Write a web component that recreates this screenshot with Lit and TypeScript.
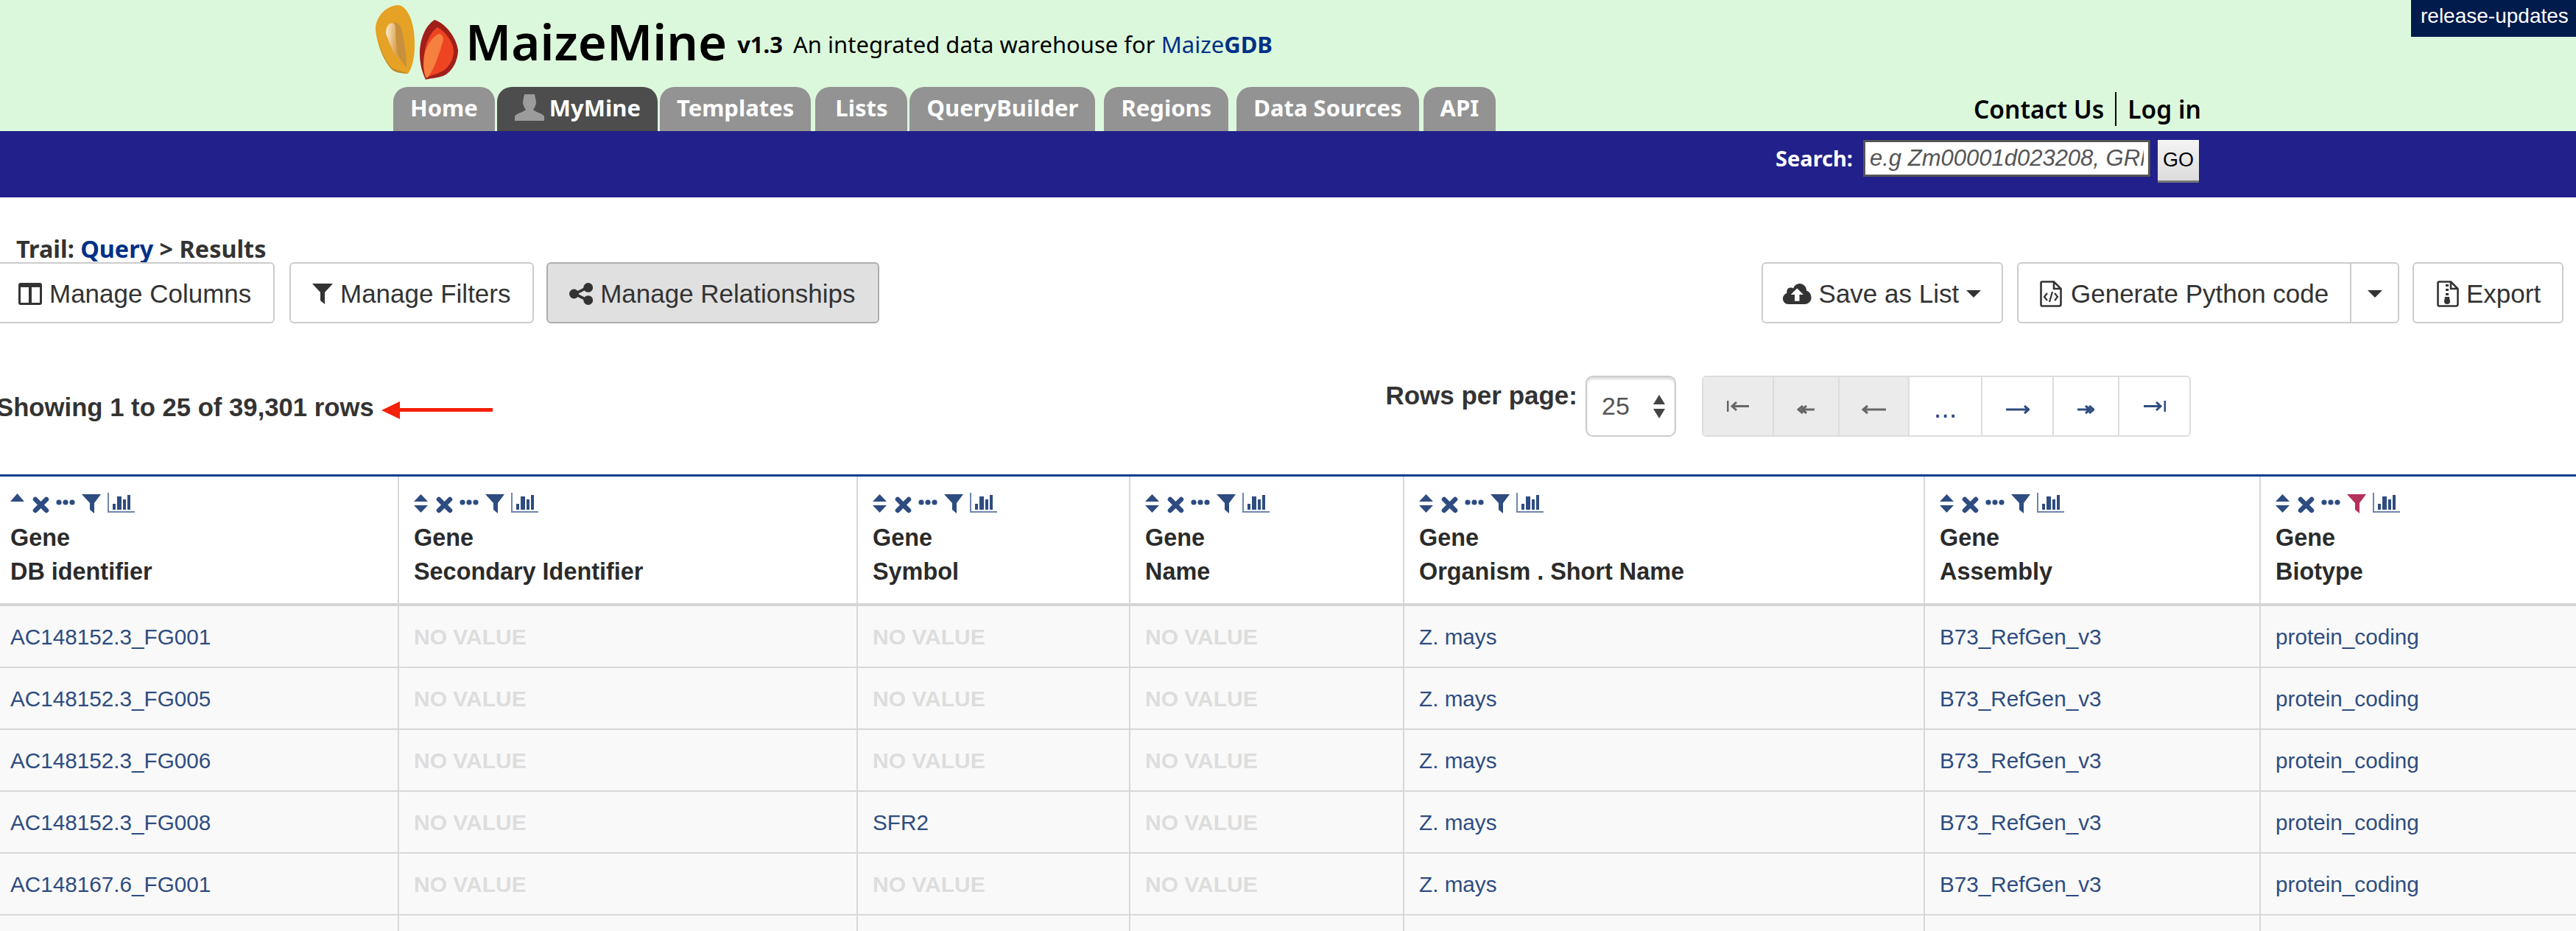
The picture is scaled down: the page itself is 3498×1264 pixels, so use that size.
import { css, html, LitElement, svg } from 'lit';
import { customElement } from 'lit/decorators.js';

const NO_VALUE = 'NO VALUE';

const COLUMNS = [
  'DB identifier',
  'Secondary Identifier',
  'Symbol',
  'Name',
  'Organism . Short Name',
  'Assembly',
  'Biotype',
];

const ROWS = [
  ['AC148152.3_FG001', '', '', '', 'Z. mays', 'B73_RefGen_v3', 'protein_coding'],
  ['AC148152.3_FG005', '', '', '', 'Z. mays', 'B73_RefGen_v3', 'protein_coding'],
  ['AC148152.3_FG006', '', '', '', 'Z. mays', 'B73_RefGen_v3', 'protein_coding'],
  ['AC148152.3_FG008', '', 'SFR2', '', 'Z. mays', 'B73_RefGen_v3', 'protein_coding'],
  ['AC148167.6_FG001', '', '', '', 'Z. mays', 'B73_RefGen_v3', 'protein_coding'],
];

const TABS = ['Home', 'MyMine', 'Templates', 'Lists', 'QueryBuilder', 'Regions', 'Data Sources', 'API'];

const logo = html`<svg class="logo" viewBox="0 0 112 104" aria-hidden="true">
  <defs>
    <linearGradient id="shine" x1="0" y1="0" x2="1" y2="0.3">
      <stop offset="0" stop-color="#fff2d8" />
      <stop offset="1" stop-color="#d9a04e" />
    </linearGradient>
  </defs>
  <path d="M30 1C42 1 50 20 52 37C54 55 54 80 44 94C34 92 24 92 20 86C10 72 2 55 0 35C-1 20 12 2 30 1Z" fill="#e5a224" />
  <path d="M4 50C8 66 14 78 22 86C30 90 38 91 44 94C34 94 24 92 20 86C12 76 6 64 4 50Z" fill="#c08a2c" />
  <path d="M24 25C30 24 34 28 36 36C39 52 42 68 42 86C34 76 24 60 21 44C20 36 21 28 24 25Z" fill="#c8903c" />
  <path d="M20 26C24 24 26 26 27 30C27 46 29 60 30 74C24 66 18 50 14 40C14 32 16 28 20 26Z" fill="url(#shine)" />
  <path d="M80 21C96 26 110 46 112 62C112 76 104 92 92 97C84 100 76 100 68 102C64 94 60 82 60 67C60 50 66 30 80 21Z" fill="#a01f1a" />
  <path d="M84 31C96 38 106 52 106 64C106 76 98 88 88 92C80 96 74 96 68 100C66 90 64 80 66 68C68 52 74 38 84 31Z" fill="#ee4422" />
  <path d="M86 40C90 40 92 44 92 48C86 68 80 88 70 100C66 96 64 88 66 70C68 58 76 44 86 40Z" fill="#f58040" />
</svg>`;

const userIcon = html`<svg class="user" viewBox="0 0 42 36" aria-hidden="true">
  <path d="M14 0H28L30 10C30 16 27 19 26 21C30 25 40 26 41 30V36H1V30C2 26 12 25 16 21C15 19 12 16 12 10Z" fill="#9c9c9c" />
</svg>`;

/** Sort, remove, more, filter and summary icons above a column title. */
function headerIcons(sorted: boolean, filterColor: string) {
  return html`<svg class="col-icons" viewBox="0 0 172 30" aria-hidden="true">
    <g fill="#2e4c80">
      ${sorted
        ? svg`<path d="M0 12 9.5 1 19 12Z" />`
        : svg`<path d="M0 12 9.5 2 19 12ZM0 17 9.5 27 19 17Z" />`}
      <circle cx="66" cy="13" r="3.6" />
      <circle cx="75" cy="13" r="3.6" />
      <circle cx="84" cy="13" r="3.6" />
      <rect x="139" y="15" width="4" height="8" />
      <rect x="145" y="5" width="6" height="18" />
      <rect x="153" y="9" width="4" height="14" />
      <rect x="159" y="3" width="4" height="20" />
    </g>
    <path d="M34 9 49 24M49 9 34 24" stroke="#2e4c80" stroke-width="6.5" stroke-linecap="round" fill="none" />
    <path d="M97 2H123L114 14V28L108 23V14Z" fill=${filterColor} />
    <path d="M133 0V26H169" stroke="#6f86ad" stroke-width="2" fill="none" />
  </svg>`;
}

const columnsIcon = html`<svg class="btn-icon" viewBox="0 0 32 30" aria-hidden="true">
  <path fill-rule="evenodd" d="M3 0H29C31 0 32 1 32 3V27C32 29 31 30 29 30H3C1 30 0 29 0 27V3C0 1 1 0 3 0ZM3 6V27H14V6ZM18 6V27H29V6Z" fill="#333" />
</svg>`;

const filterIcon = html`<svg class="btn-icon small" viewBox="0 0 28 28" aria-hidden="true">
  <path d="M0 0H28L17 12V28L11 23V12Z" fill="#333" />
</svg>`;

const shareIcon = html`<svg class="btn-icon" viewBox="0 0 30 28" aria-hidden="true">
  <path d="M23 6 7 14 23 22" stroke="#333" stroke-width="3.5" fill="none" />
  <circle cx="24" cy="6" r="6" fill="#333" />
  <circle cx="6" cy="14" r="6" fill="#333" />
  <circle cx="24" cy="22" r="6" fill="#333" />
</svg>`;

const cloudIcon = html`<svg class="btn-icon" viewBox="0 0 36 28" aria-hidden="true">
  <path fill-rule="evenodd" d="M7 27C3 27 0 24 0 20C0 17 2 14 5 13C5 12 5 12 5 11C5 8 7 6 10 6C11 6 12 6 13 7C15 3 18 1 21 1C26 1 30 5 30 10C34 11 36 15 36 19C36 24 32 27 28 27ZM18 7 10 15H15V23H21V15H26Z" fill="#333" />
</svg>`;

const codeFileIcon = html`<svg class="btn-icon tall" viewBox="0 0 30 36" aria-hidden="true">
  <path d="M3 1.5H19L28.5 11V32C28.5 33.5 27.5 34.5 26 34.5H3C2 34.5 1.5 33.5 1.5 32V3C1.5 2 2 1.5 3 1.5ZM19 1.5V11H28.5" stroke="#333" stroke-width="2.6" fill="none" />
  <path d="M10 17 6 22 10 27M20 17 24 22 20 27M17 15 13 29" stroke="#333" stroke-width="2.2" fill="none" />
</svg>`;

const zipFileIcon = html`<svg class="btn-icon tall" viewBox="0 0 30 36" aria-hidden="true">
  <path d="M3 1.5H19L28.5 11V32C28.5 33.5 27.5 34.5 26 34.5H3C2 34.5 1.5 33.5 1.5 32V3C1.5 2 2 1.5 3 1.5ZM19 1.5V11H28.5" stroke="#333" stroke-width="2.6" fill="none" />
  <path d="M12 5H16V8H12ZM12 11H16V14H12ZM12 17H16V20H12Z" fill="#333" />
  <path d="M11 22H17L18 28A4 4 0 1 1 10 28Z" fill="#333" />
</svg>`;

const caret = html`<span class="caret"></span>`;

const pagerIcons = {
  first: svg`<path d="M1 0V15M30 7.5H7M13 2 7 7.5 13 13" />`,
  prev2: svg`<path d="M24 6H8M8 1 2 6 8 11M13 1 7 6 13 11" />`,
  prev: svg`<path d="M34 6H3M9 1 3 6 9 11" />`,
  next: svg`<path d="M0 6H31M25 1 31 6 25 11" />`,
  next2: svg`<path d="M0 6H16M16 1 22 6 16 11M11 1 17 6 11 11" />`,
  last: svg`<path d="M29 0V15M0 7.5H23M17 2 23 7.5 17 13" />`,
};

const PAGER = [
  { icon: pagerIcons.first, w: 31, cls: 'off up', width: 96 },
  { icon: pagerIcons.prev2, w: 25, cls: 'off', width: 89 },
  { icon: pagerIcons.prev, w: 35, cls: 'off', width: 95 },
  { text: '...', cls: 'dots', width: 99 },
  { icon: pagerIcons.next, w: 32, cls: '', width: 97 },
  { icon: pagerIcons.next2, w: 23, cls: '', width: 89 },
  { icon: pagerIcons.last, w: 30, cls: 'up', width: 95 },
];

@customElement('app-root')
export class AppRoot extends LitElement {
  static override styles = css`
    :host {
      display: block;
      position: relative;
      height: 1264px;
      overflow: hidden;
      background: #fff;
      color: #333;
      font-family: 'Liberation Sans', Arial, sans-serif;
    }

    .header {
      height: 178px;
      box-sizing: border-box;
      padding-left: 510px;
      background: #dcf8dc;
      display: flex;
      flex-direction: column;
      font-family: 'Noto Sans', sans-serif;
    }

    .brand {
      height: 118px;
      display: flex;
      align-items: flex-start;
    }

    .logo {
      width: 112px;
      height: 104px;
      margin-top: 6px;
      flex: none;
    }

    .title {
      margin: 10px 0 0 10px;
      font-size: 67px;
      line-height: 92px;
      font-weight: 600;
      color: #000;
      white-space: nowrap;
    }

    .version {
      margin: 38px 0 0 14px;
      font-size: 31px;
      line-height: 44px;
      font-weight: 700;
      color: #000;
    }

    .tagline {
      margin: 38px 0 0 14px;
      font-size: 31px;
      line-height: 44px;
      color: #000;
      white-space: nowrap;
    }

    .tagline b {
      color: #003087;
    }

    .tagline span {
      color: #003087;
    }

    .nav-row {
      height: 60px;
      display: flex;
      padding-left: 24px;
    }

    .tabs {
      display: flex;
      gap: 3px;
      width: 2146px;
      flex: none;
    }

    .tab {
      display: flex;
      align-items: center;
      gap: 6px;
      box-sizing: border-box;
      padding: 0 23px 4px;
      background: #939393;
      border-radius: 20px 20px 0 0;
      color: #fff;
      font-size: 31px;
      font-weight: 700;
      white-space: nowrap;
    }

    .tab:nth-child(4) {
      margin-left: 3px;
      padding: 0 27px 4px;
    }

    .tab:nth-child(6) {
      margin-left: 9px;
    }

    .tab:nth-child(7) {
      margin-left: 8px;
    }

    .tab:nth-child(8) {
      margin-left: 3px;
    }

    .tab.active {
      background: #4d4d4d;
    }

    .user {
      width: 42px;
      height: 36px;
    }

    .account {
      display: flex;
      align-items: center;
      height: 36px;
      margin-top: 12px;
      font-size: 33.5px;
      font-weight: 600;
      color: #000;
      white-space: nowrap;
    }

    .account span + span {
      margin-left: 15px;
      padding-left: 15px;
      border-left: 2px solid #000;
    }

    .release {
      position: absolute;
      top: 0;
      right: 0;
      width: 224px;
      height: 50px;
      box-sizing: border-box;
      padding-left: 13px;
      background: #001b4c;
      color: #fff;
      font-size: 28px;
      line-height: 44px;
      white-space: nowrap;
    }

    .search-band {
      height: 90px;
      box-sizing: border-box;
      padding: 12px 0 0 2411px;
      background: #22208a;
      display: flex;
      align-items: flex-start;
    }

    .search-label {
      width: 119px;
      flex: none;
      font-family: 'Noto Sans', sans-serif;
      font-size: 29px;
      line-height: 50px;
      font-weight: 700;
      color: #fff;
      white-space: nowrap;
    }

    .search-input {
      width: 390px;
      height: 50px;
      box-sizing: border-box;
      border: 3px solid #555;
      padding: 0 6px;
      background: #fff;
      font: italic 31px 'Liberation Sans', Arial, sans-serif;
      outline: none;
    }

    .search-input::placeholder {
      color: #555;
      opacity: 1;
    }

    .go {
      width: 56px;
      height: 58px;
      margin-left: 10px;
      padding: 0;
      border: 0;
      border-bottom: 3px solid #777;
      background: linear-gradient(#f4f4f4, #dcdcdc);
      color: #000;
      font: 27px 'Liberation Sans', Arial, sans-serif;
    }

    .trail {
      height: 88px;
      box-sizing: border-box;
      padding: 50px 0 0 22px;
      font-family: 'Noto Sans', sans-serif;
      font-size: 32.4px;
      line-height: 38px;
      font-weight: 700;
      color: #333;
      white-space: nowrap;
    }

    .trail a {
      color: #003087;
      text-decoration: none;
    }

    .toolbar {
      height: 83px;
      display: flex;
      justify-content: space-between;
      margin-left: -8px;
      padding-right: 17px;
    }

    .group {
      display: flex;
    }

    .btn {
      display: flex;
      align-items: center;
      gap: 10px;
      box-sizing: border-box;
      height: 83px;
      padding-top: 2px;
      border: 2px solid #ccc;
      border-radius: 6px;
      background: #fff;
      font-size: 35px;
      color: #333;
      white-space: nowrap;
    }

    .btn.active {
      background: #e0e0e0;
      border-color: #adadad;
    }

    .btn-icon {
      height: 30px;
      width: auto;
      flex: none;
    }

    .btn-icon.small {
      height: 28px;
    }

    .btn-icon.tall {
      height: 36px;
    }

    .caret {
      width: 0;
      height: 0;
      border-top: 10px solid #333;
      border-left: 10px solid transparent;
      border-right: 10px solid transparent;
    }

    .columns-btn { width: 381px; margin-right: 20px; padding-left: 31px; }
    .filters-btn { width: 332px; margin-right: 17px; padding-left: 29px; }
    .relations-btn { width: 452px; padding-left: 29px; }
    .save-btn { width: 328px; margin-right: 19px; padding-left: 27px; }
    .python-btn { width: 454px; border-radius: 6px 0 0 6px; padding-left: 29px; gap: 12px; }
    .python-caret { width: 65px; margin-right: 18px; border-left: 0; border-radius: 0 6px 6px 0; justify-content: center; }
    .export-btn { width: 205px; padding-left: 31px; }

    .status {
      height: 205px;
      box-sizing: border-box;
      display: flex;
      justify-content: space-between;
      padding: 71px 523px 0 0;
    }

    .showing {
      display: flex;
      align-items: center;
      gap: 10px;
      height: 83px;
      margin: 0 0 0 -5px;
      font-size: 34.7px;
      font-weight: 700;
      position: relative;
      top: 2px;
      white-space: nowrap;
    }

    .arrow {
      width: 151px;
      height: 26px;
      margin-top: 6px;
    }

    .paging {
      display: flex;
      align-items: flex-start;
    }

    .rows-label {
      font-size: 35px;
      font-weight: 700;
      line-height: 54px;
      margin-right: 11px;
      white-space: nowrap;
    }

    .select {
      width: 123px;
      height: 83px;
      box-sizing: border-box;
      display: flex;
      align-items: center;
      justify-content: space-between;
      padding: 0 13px 0 20px;
      border: 2px solid #ccc;
      border-radius: 10px;
      box-shadow: inset 0 3px 3px #ddd;
      font-size: 34px;
      color: #555;
      margin-right: 35px;
    }

    .spin {
      display: flex;
      flex-direction: column;
      gap: 6px;
    }

    .spin i {
      width: 0;
      height: 0;
      border-left: 8px solid transparent;
      border-right: 8px solid transparent;
    }

    .spin i:first-child {
      border-bottom: 13px solid #444;
    }

    .spin i:last-child {
      border-top: 13px solid #444;
    }

    .pager {
      display: flex;
      height: 83px;
      box-sizing: border-box;
      border: 2px solid #ddd;
      border-radius: 6px;
      overflow: hidden;
    }

    .pg {
      display: flex;
      align-items: center;
      justify-content: center;
      box-sizing: border-box;
      border-right: 2px solid #ddd;
      color: #2e4c80;
      padding-top: 11px;
    }

    .pg:last-child {
      border-right: 0;
    }

    .pg.off {
      background: #ebebeb;
      color: #666;
    }

    .pg.up {
      padding-top: 0;
    }

    .pg.dots {
      font-size: 38px;
      padding: 6px 0 0;
    }

    .pg svg {
      fill: none;
      stroke: currentColor;
      stroke-width: 3;
    }

    table {
      width: 3504px;
      margin-left: -6px;
      table-layout: fixed;
      border-collapse: separate;
      border-spacing: 0;
      border-top: 3px solid #003f8c;
    }

    col:nth-child(1) { width: 548px; }
    col:nth-child(2) { width: 623px; }
    col:nth-child(3) { width: 370px; }
    col:nth-child(4) { width: 372px; }
    col:nth-child(5) { width: 707px; }
    col:nth-child(6) { width: 456px; }

    th {
      height: 176px;
      box-sizing: border-box;
      padding: 22px 20px 0;
      vertical-align: top;
      text-align: left;
      border-right: 2px solid #d8d8d8;
      border-bottom: 4px solid #d5d5d5;
      font-size: 32.4px;
      line-height: 46px;
      font-weight: 700;
      color: #2b2b2b;
      white-space: nowrap;
    }

    th:last-child,
    td:last-child {
      border-right: 0;
    }

    .col-icons {
      display: block;
      width: 172px;
      height: 30px;
      margin-bottom: 8px;
    }

    td {
      height: 84px;
      box-sizing: border-box;
      padding: 2px 20px 0;
      background: #f9f9f9;
      border-right: 2px solid #d8d8d8;
      border-bottom: 2px solid #d8d8d8;
      font-size: 29.7px;
      color: #2e4c80;
      white-space: nowrap;
    }

    td.empty {
      font-weight: 700;
      font-size: 30px;
      color: #ddd;
    }
  `;

  private renderPager() {
    return PAGER.map(
      (p) => html`<div class="pg ${p.cls}" style="width:${p.width}px">
        ${p.icon
          ? html`<svg width=${p.w} height="15" viewBox="0 0 ${p.w} 15" aria-hidden="true">${p.icon}</svg>`
          : p.text}
      </div>`,
    );
  }

  override render() {
    return html`
      <div class="header">
        <div class="brand">
          ${logo}
          <div class="title">MaizeMine</div>
          <div class="version">v1.3</div>
          <div class="tagline">An integrated data warehouse for <span>Maize</span><b>GDB</b></div>
        </div>
        <div class="nav-row">
          <div class="tabs">
            ${TABS.map(
              (t) => html`<div class="tab ${t === 'MyMine' ? 'active' : ''}">${t === 'MyMine' ? userIcon : ''}${t}</div>`,
            )}
          </div>
          <div class="account"><span>Contact Us</span><span>Log in</span></div>
        </div>
      </div>
      <div class="release">release-updates</div>
      <div class="search-band">
        <div class="search-label">Search:</div>
        <input class="search-input" placeholder="e.g Zm00001d023208, GRMZM2G" />
        <button class="go">GO</button>
      </div>

      <div class="trail">Trail: <a>Query</a> &gt; Results</div>
      <div class="toolbar">
        <div class="group">
          <div class="btn columns-btn">${columnsIcon}Manage Columns</div>
          <div class="btn filters-btn">${filterIcon}Manage Filters</div>
          <div class="btn active relations-btn">${shareIcon}Manage Relationships</div>
        </div>
        <div class="group">
          <div class="btn save-btn">${cloudIcon}Save as List ${caret}</div>
          <div class="btn python-btn">${codeFileIcon}Generate Python code</div>
          <div class="btn python-caret">${caret}</div>
          <div class="btn export-btn">${zipFileIcon}Export</div>
        </div>
      </div>

      <div class="status">
        <div class="showing">
          Showing 1 to 25 of 39,301 rows
          <svg class="arrow" viewBox="0 0 151 26" aria-hidden="true">
            <path d="M0 13 25 1V10H151V15H25V25Z" fill="#f5200a" />
          </svg>
        </div>
        <div class="paging">
          <div class="rows-label">Rows per page:</div>
          <div class="select">25<div class="spin"><i></i><i></i></div></div>
          <div class="pager">${this.renderPager()}</div>
        </div>
      </div>

      <table>
        <colgroup>${COLUMNS.map(() => html`<col />`)}</colgroup>
        <thead>
          <tr>
            ${COLUMNS.map(
              (name, i) => html`<th>
                ${headerIcons(i === 0, i === 6 ? '#b5325a' : '#2e4c80')}
                <div>Gene</div>
                <div>${name}</div>
              </th>`,
            )}
          </tr>
        </thead>
        <tbody>
          ${ROWS.map(
            (row) => html`<tr>
              ${row.map((v) => (v ? html`<td>${v}</td>` : html`<td class="empty">${NO_VALUE}</td>`))}
            </tr>`,
          )}
          <tr>${COLUMNS.map(() => html`<td></td>`)}</tr>
        </tbody>
      </table>
    `;
  }
}
